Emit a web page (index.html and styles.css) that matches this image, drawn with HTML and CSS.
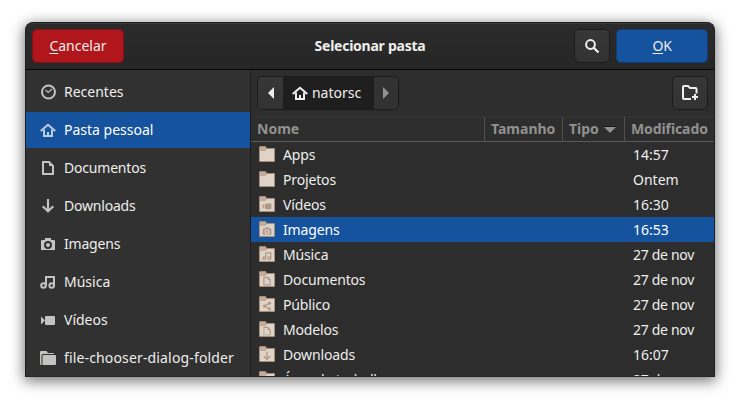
FILE: index.html
```html
<!DOCTYPE html>
<html lang="pt-BR">
<head>
<meta charset="utf-8">
<title>Selecionar pasta</title>
<link rel="stylesheet" href="styles.css">
</head>
<body>
<svg class="defs" width="0" height="0">
  <symbol id="home" viewBox="0 0 16 16"><path d="M.7 9 8 2.700 15.300 9" fill="none" stroke="currentColor" stroke-width="2"/><path d="M4 7.500V14h8V7.500" fill="none" stroke="currentColor" stroke-width="2"/><path d="M7 10h2v4H7z" fill="currentColor"/></symbol>
  <symbol id="doc" viewBox="0 0 16 16"><path d="M3 2h6l4 4v8H3z" fill="none" stroke="currentColor" stroke-width="2"/><path d="M9 2v4h4z" fill="currentColor"/></symbol>
  <symbol id="down" viewBox="0 0 16 16"><path d="M8 1v12M2.700 8.200 8 13.200l5.300-5" fill="none" stroke="currentColor" stroke-width="2.200"/></symbol>
  <symbol id="camera" viewBox="0 0 16 16"><path fill-rule="evenodd" fill="currentColor" d="M5 2h6v2h3a1 1 0 0 1 1 1v9H1V5a1 1 0 0 1 1-1h3zM8 5a4 4 0 1 0 0 8 4 4 0 0 0 0-8zm0 2a2 2 0 1 1 0 4 2 2 0 0 1 0-4z"/></symbol>
  <symbol id="music" viewBox="0 0 16 16"><g fill="none" stroke="currentColor" stroke-width="2"><circle cx="3.500" cy="11.500" r="2.300"/><circle cx="11.700" cy="11.500" r="2.300"/><path d="M6 11.500V3h8v8.500"/></g></symbol>
  <symbol id="video" viewBox="0 0 16 16"><path fill="currentColor" d="M1 4.500 5 8.500 1 12.500z"/><rect x="5" y="4" width="10" height="9" rx="1" fill="currentColor"/></symbol>
  <symbol id="share" viewBox="0 0 16 16"><path d="M13 3 4 8l9 5" fill="none" stroke="currentColor" stroke-width="2"/><g fill="currentColor"><circle cx="12" cy="3.500" r="2.500"/><circle cx="4" cy="8" r="2.500"/><circle cx="12" cy="12.500" r="2.500"/></g></symbol>
  <symbol id="template" viewBox="0 0 16 16"><path d="M3 2h6l4 4v8" fill="none" stroke="currentColor" stroke-width="2"/><path d="M3 2v12h10" fill="none" stroke="currentColor" stroke-width="2" stroke-dasharray="2 1.500"/><path d="M9 2v4h4z" fill="currentColor"/></symbol>
  <symbol id="folder" viewBox="0 0 16 16"><path d="M0 1.500Q0 0 1 0h5.500l1.500 2h7q1 0 1 1v12q0 1-1 1H1q-1 0-1-1z" fill="#a68d7a"/><path d="M1 1h5l1.500 2L5 5H1z" fill="#c3aa99"/><path d="M1 5h4.500L8 3h7v12H1z" fill="#dfd2c7"/></symbol>
</svg>
<main class="dialog">
  <header class="titlebar">
    <button class="btn cancel"><u>C</u>ancelar</button>
    <h1>Selecionar pasta</h1>
    <button class="btn square"><svg width="16" height="16" viewBox="0 0 16 16"><circle cx="6.500" cy="6.500" r="4.400" fill="none" stroke="currentColor" stroke-width="2"/><path d="m9.500 9.500 5 5" stroke="currentColor" stroke-width="2.300"/></svg></button>
    <button class="btn ok"><u>O</u>K</button>
  </header>
  <div class="body">
    <nav class="sidebar">
      <a><svg viewBox="0 0 16 16"><circle cx="8.500" cy="8" r="6.500" fill="none" stroke="currentColor" stroke-width="2"/><path d="m5.500 6 2.700 2.500L12 5" fill="none" stroke="currentColor" stroke-width="1.200"/></svg>Recentes</a>
      <a class="active"><svg><use href="#home"/></svg>Pasta pessoal</a>
      <a class="tight"><svg><use href="#doc"/></svg>Documentos</a>
      <a class="tight"><svg><use href="#down"/></svg>Downloads</a>
      <a class="tight"><svg><use href="#camera"/></svg>Imagens</a>
      <a><svg><use href="#music"/></svg>Música</a>
      <a><svg><use href="#video"/></svg>Vídeos</a>
      <a class="wide"><svg viewBox="0 0 16 16"><path fill="currentColor" d="M0 2q0-1 1-1h5.500L8 3h5q1 0 1 1H3Q1.500 4 1.500 5.500V15H1q-1 0-1-1z"/><path fill="currentColor" d="M3.500 5H15q1 0 1 1v8q0 1-1 1H2.500V6q0-1 1-1z"/></svg>file-chooser-dialog-folder</a>
    </nav>
    <section class="content">
      <div class="toolbar">
        <div class="path">
          <span class="back"><svg width="6" height="12" viewBox="0 0 6 12"><path d="M6 0v12L0 6z" fill="currentColor"/></svg></span>
          <span class="crumb"><svg><use href="#home"/></svg>natorsc</span>
          <span class="next"><svg width="6" height="12" viewBox="0 0 6 12"><path d="M0 0v12l6-6z" fill="currentColor"/></svg></span>
        </div>
        <button class="btn square"><svg width="16" height="16" viewBox="0 0 16 16"><path d="M9 14H2q-1 0-1-1V2q0-1 1-1h4l2 2h5.500q1 0 1 1v4.500" fill="none" stroke="currentColor" stroke-width="2"/><path d="M13 9v6M10 12h6" stroke="currentColor" stroke-width="2"/></svg></button>
      </div>
      <div class="columns">
        <span>Nome</span><span>Tamanho</span><span>Tipo<svg class="sort" viewBox="0 0 12 7"><path d="M0 1h12L6 7z" fill="currentColor"/><path d="M0 .5h12" stroke="#171717"/></svg></span><span>Modificado</span>
      </div>
      <div class="files">
        <div class="row"><i><svg><use href="#folder"/></svg></i><span>Apps</span><time>14:57</time></div>
        <div class="row"><i><svg><use href="#folder"/></svg></i><span>Projetos</span><time>Ontem</time></div>
        <div class="row"><i><svg><use href="#folder"/></svg><svg class="emblem"><use href="#video"/></svg></i><span>Vídeos</span><time>16:30</time></div>
        <div class="row active"><i><svg><use href="#folder"/></svg><svg class="emblem"><use href="#camera"/></svg></i><span>Imagens</span><time>16:53</time></div>
        <div class="row"><i><svg><use href="#folder"/></svg><svg class="emblem"><use href="#music"/></svg></i><span>Música</span><time class="date">27 de nov</time></div>
        <div class="row"><i><svg><use href="#folder"/></svg><svg class="emblem"><use href="#doc"/></svg></i><span>Documentos</span><time class="date">27 de nov</time></div>
        <div class="row"><i><svg><use href="#folder"/></svg><svg class="emblem"><use href="#share"/></svg></i><span>Público</span><time class="date">27 de nov</time></div>
        <div class="row"><i><svg><use href="#folder"/></svg><svg class="emblem"><use href="#template"/></svg></i><span>Modelos</span><time class="date">27 de nov</time></div>
        <div class="row"><i><svg><use href="#folder"/></svg><svg class="emblem"><use href="#down"/></svg></i><span>Downloads</span><time>16:07</time></div>
        <div class="row"><i><svg><use href="#folder"/></svg></i><span>Área de trabalho</span><time class="date">27 de nov</time></div>
      </div>
    </section>
  </div>
</main>
</body>
</html>
```
FILE: styles.css
```css
* { box-sizing: border-box; }
html, body { margin: 0; height: 100%; overflow: hidden; }
body {
  padding: 22px 25px 28px;
  background: #fff;
  color: #eeeeec;
  font: 14px/20px "Noto Sans", sans-serif;
}
svg { display: block; flex: none; }
.defs { position: absolute; }
.dialog {
  height: 355px;
  display: flex;
  flex-direction: column;
  overflow: hidden;
  border: 1px solid #1f1f1f;
  border-bottom-color: #272727;
  border-radius: 8px 8px 0 0;
  background: #2d2d2d;
  box-shadow: 0 3px 14px 1px rgba(0, 0, 0, .55);
}
.titlebar {
  flex: none;
  height: 47px;
  display: grid;
  grid-template-columns: 92px 1fr 36px 92px;
  column-gap: 6px;
  padding: 6px 6px 0;
  align-items: start;
  border-bottom: 1px solid #070707;
  box-shadow: inset 0 1px #383838;
  background: linear-gradient(#2b2b2b, #262626);
}
h1 {
  margin: 0 0 0 42px;
  font-size: 14px;
  line-height: 34px;
  font-weight: 700;
  letter-spacing: -.25px;
  text-align: center;
}
.btn {
  height: 34px;
  padding: 0;
  display: flex;
  align-items: center;
  justify-content: center;
  border: 1px solid #1b1b1b;
  border-radius: 5px;
  background: linear-gradient(#373737, #323232);
  color: #eeeeec;
  font: inherit;
}
.btn u { text-decoration-thickness: 1px; text-underline-offset: 2px; }
.cancel { background: #b2161d; border-color: #851015; }
.ok { background: #15539e; border-color: #103f78; letter-spacing: -.3px; }
.square { width: 36px; }
.body { flex: 1; min-height: 0; display: flex; }
.sidebar {
  width: 225px;
  flex: none;
  padding-top: 4px;
  display: flex;
  flex-direction: column;
  gap: 2px;
  border-right: 1px solid #1b1b1b;
  background: #313131;
}
.sidebar a {
  height: 36px;
  flex: none;
  display: flex;
  align-items: center;
  gap: 8px;
  padding-left: 14px;
  white-space: nowrap;
}
.sidebar .tight { letter-spacing: -.2px; }
.sidebar .wide { letter-spacing: .15px; }
.sidebar svg, .crumb svg, .row i svg { width: 16px; height: 16px; }
.sidebar svg { color: #c3c3c2; }
.sidebar .active, .row.active { background: #15539e; color: #fff; }
.sidebar .active svg { color: #b9cce2; }
.content { flex: 1; min-width: 0; display: flex; flex-direction: column; overflow: hidden; }
.toolbar {
  height: 47px;
  flex: none;
  display: flex;
  justify-content: space-between;
  align-items: flex-start;
  padding: 6px 6px 0;
  border-bottom: 1px solid #353535;
}
.path {
  width: 142px;
  height: 34px;
  display: flex;
  border: 1px solid #1b1b1b;
  border-radius: 5px;
  overflow: hidden;
  background: #1e1e1e;
}
.path span { display: flex; align-items: center; justify-content: center; }
.back { width: 25px; background: linear-gradient(#373737, #323232); }
.path .crumb { flex: 1; gap: 4px; padding-right: 4px; }
.next { width: 24px; background: #323232; color: #919190; }
.columns {
  height: 25px;
  flex: none;
  display: grid;
  grid-template-columns: 234px 78px 62px 1fr;
  border-bottom: 1px solid #5a5a5a;
  color: #919190;
  font-weight: 700;
  line-height: 24px;
}
.columns span { display: flex; align-items: center; padding-left: 6px; border-right: 1px solid #505050; }
.columns span:last-child { border: 0; letter-spacing: -.1px; }
.sort { width: 12px; height: 7px; margin-left: 5px; }
.row { height: 25px; display: grid; grid-template-columns: 24px 350px 1fr; padding-left: 8px; line-height: 25px; }
.row span { letter-spacing: -.15px; }
.date { letter-spacing: -.3px; }
.row i { position: relative; padding-top: 4px; }
.row i .emblem { position: absolute; left: 3px; top: 9px; width: 10px; height: 10px; color: #af9987; }
```
